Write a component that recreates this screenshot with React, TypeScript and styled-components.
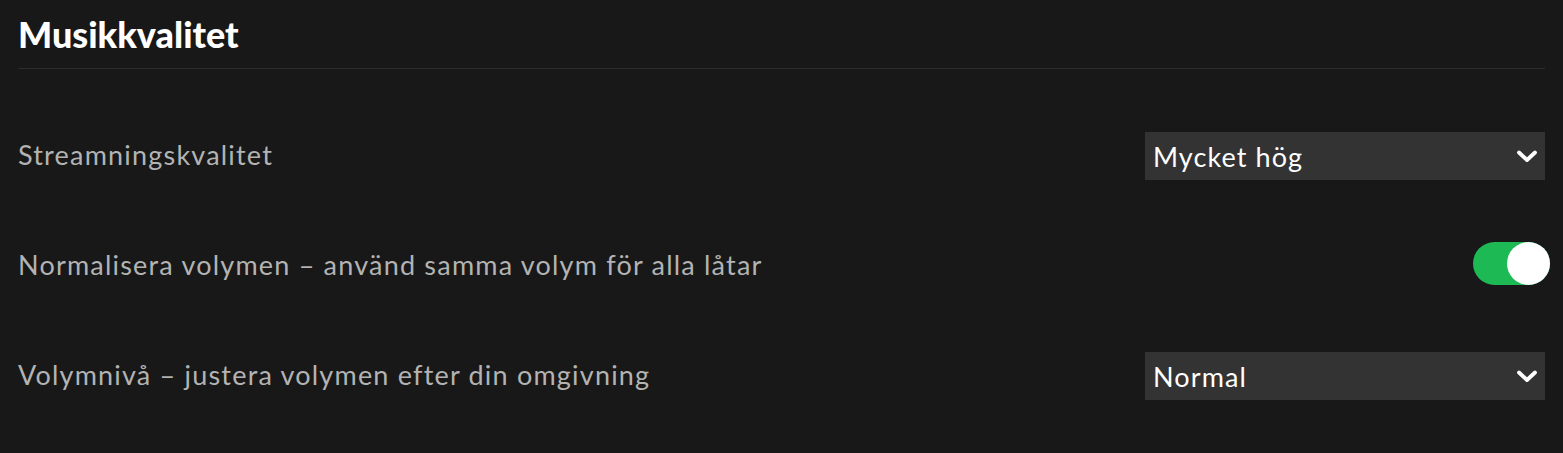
import React, { useState } from 'react'
import styled, { createGlobalStyle } from 'styled-components'

const GlobalStyle = createGlobalStyle`
  html, body {
    margin: 0;
    padding: 0;
    background-color: #181818;
  }
  body {
    font-family: Lato, 'Liberation Sans', sans-serif;
    -webkit-font-smoothing: antialiased;
  }
`

const Section = styled.section`
  padding: 0 18px;
  width: 100%;
  box-sizing: border-box;
  min-height: 453px;
`

const Heading = styled.h1`
  margin: 0;
  height: 69px;
  box-sizing: border-box;
  padding-top: 16px;
  font-size: 36px;
  line-height: 36px;
  font-weight: 900;
  color: #fff;
  border-bottom: 1px solid #2c2c2c;
`

const Rows = styled.div`
  display: flex;
  flex-direction: column;
  gap: 62px;
  padding-top: 63px;
`

const Row = styled.div`
  display: flex;
  align-items: center;
  justify-content: space-between;
  height: 48px;
`

const Label = styled.span`
  font-size: 27px;
  color: #b3b3b3;
  letter-spacing: 1.2px;
  margin-top: -3px;
`

const SelectBox = styled.div`
  width: 400px;
  height: 48px;
  box-sizing: border-box;
  background-color: #333;
  display: flex;
  align-items: center;
  justify-content: space-between;
  padding: 0 7px 0 8px;
  color: #fff;
  font-size: 27px;
  letter-spacing: 1.1px;
`

const Chevron = styled.svg`
  width: 22px;
  height: 14px;
`

const Toggle = styled.button<{ $on: boolean }>`
  width: 77px;
  height: 43px;
  border: none;
  border-radius: 22px;
  padding: 0;
  margin: -6px -5px 0 0;
  background-color: ${(p) => (p.$on ? '#1db954' : '#535353')};
  display: flex;
  justify-content: ${(p) => (p.$on ? 'flex-end' : 'flex-start')};
  cursor: pointer;
`

const Knob = styled.span`
  width: 43px;
  height: 43px;
  border-radius: 50%;
  background-color: #fff;
`

const Select = ({ value }: { value: string }) => (
  <SelectBox>
    <span>{value}</span>
    <Chevron viewBox="0 0 22 14">
      <polyline
        points="3,3.5 11,11 19,3.5"
        fill="none"
        stroke="#fff"
        strokeWidth="3.8"
        strokeLinecap="round"
        strokeLinejoin="round"
      />
    </Chevron>
  </SelectBox>
)

export default function App() {
  const [normalize, setNormalize] = useState(true)

  return (
    <>
      <GlobalStyle />
      <Section>
        <Heading>Musikkvalitet</Heading>
        <Rows>
          <Row>
            <Label>Streamningskvalitet</Label>
            <Select value="Mycket hög" />
          </Row>
          <Row>
            <Label>Normalisera volymen – använd samma volym för alla låtar</Label>
            <Toggle $on={normalize} onClick={() => setNormalize(!normalize)}>
              <Knob />
            </Toggle>
          </Row>
          <Row>
            <Label>Volymnivå – justera volymen efter din omgivning</Label>
            <Select value="Normal" />
          </Row>
        </Rows>
      </Section>
    </>
  )
}
